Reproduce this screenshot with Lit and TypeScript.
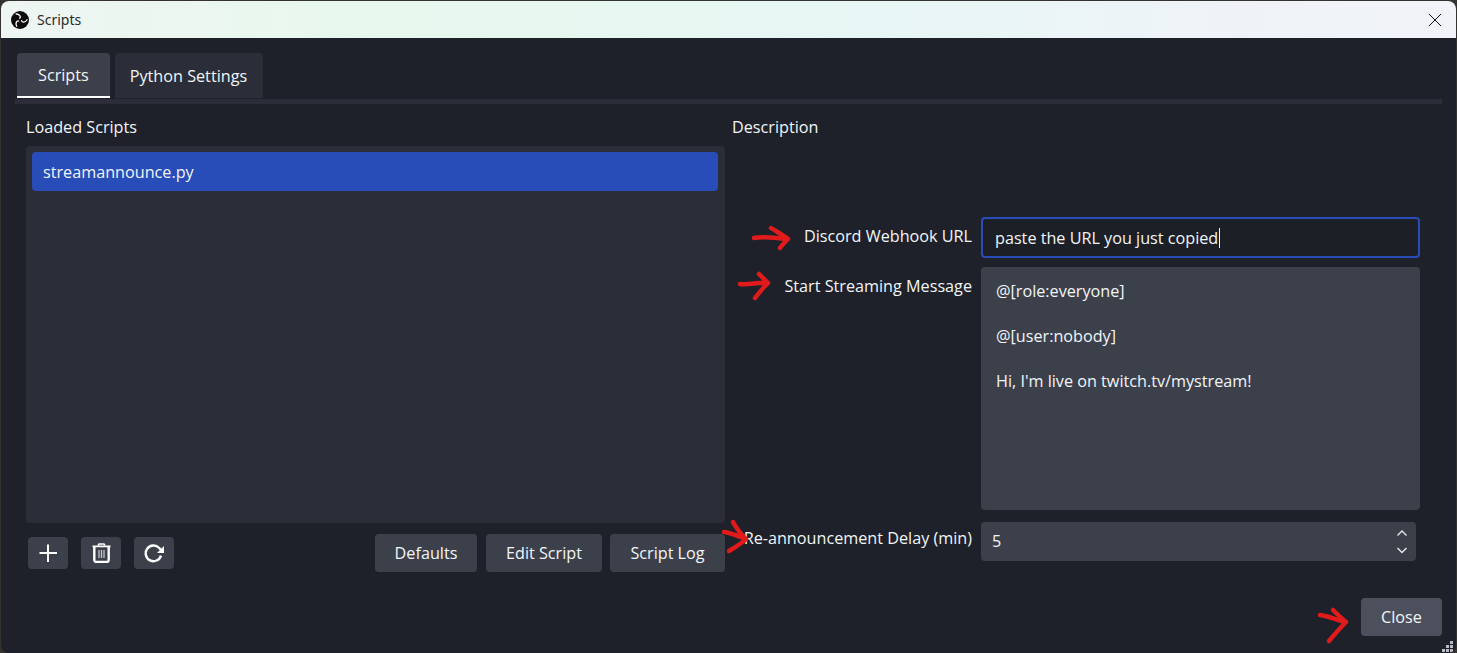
import { LitElement, css, html, svg } from "lit";
import { customElement } from "lit/decorators.js";

const arrows = svg`
  <path d="M754 238 C763 236 775 238 787 239 M771 228 C777 232 783 235 788 239 C785 242 782 245 780 248" />
  <path d="M740 284 C750 285 758 282 767 283 M759 274 C762 277 765 280 768 283 C763 288 758 294 755 298" />
  <path d="M724 532 C732 533 740 537 746 539 M733 522 C736 528 741 534 746 539 C741 544 734 548 729 551" />
  <path d="M1320 615 C1328 616 1337 620 1345 622 M1333 610 C1337 614 1341 618 1346 622 C1340 628 1334 635 1329 641" />
`;

// one arm of the logo swirl, drawn three times
const blade = "M8.800 7.300C10.200 5.800 8.600 3 5.200 3";

@customElement("app-root")
export class AppRoot extends LitElement {
  render() {
    return html`
      <div class="window">
        <header class="titlebar">
          <svg class="logo" viewBox="0 0 18 18">
            <circle cx="9" cy="9" r="9" fill="#0c0c0c" />
            <g fill="none" stroke="#fff" stroke-width="1.300" stroke-linecap="round">
              <path d="${blade}" />
              <path d="${blade}" transform="rotate(120 9 9)" />
              <path d="${blade}" transform="rotate(240 9 9)" />
            </g>
          </svg>
          <span class="title">Scripts</span>
          <svg class="x" viewBox="0 0 12 12"><path d="M0 0 12 12M12 0 0 12" /></svg>
        </header>

        <main class="body">
          <nav class="tabs">
            <div class="tab active">Scripts</div>
            <div class="tab">Python Settings</div>
          </nav>
          <div class="pane-line"></div>

          <div class="columns">
            <section class="left">
              <div class="heading">Loaded Scripts</div>
              <div class="list">
                <div class="item">streamannounce.py</div>
              </div>
              <div class="toolbar">
                <button class="icon-btn">
                  <svg viewBox="-1 0 20 20" width="20" height="20"><path d="M9 1.500v17.500M.5 10h17.500" stroke="#fff" stroke-width="2" fill="none" /></svg>
                </button>
                <button class="icon-btn">
                  <svg viewBox="0 0 20 20" width="20" height="20" fill="none" stroke="#fff">
                    <path d="M1.500 3.300h18" stroke-width="1.800" />
                    <path d="M7 2.500 8 1h5l1 1.500" stroke-width="1.400" />
                    <path d="M3.300 4v13a2.200 2.200 0 0 0 2.200 2h10a2.200 2.200 0 0 0 2.200-2V4" stroke-width="2.400" />
                    <path d="M8 7v8M10.500 7v8M13 7v8" stroke-width="1.300" stroke="#c8c8c8" />
                  </svg>
                </button>
                <button class="icon-btn">
                  <svg viewBox="0 0 20 20" width="20" height="20" fill="none" stroke="#fff">
                    <path d="M17 12.600A7.800 7.800 0 1 1 15.200 5L18 8" stroke-width="2.400" />
                    <path d="M20 3v7h-7z" fill="#fff" stroke="none" />
                  </svg>
                </button>
                <span class="spacer"></span>
                <button class="btn defaults">Defaults</button>
                <button class="btn edit">Edit Script</button>
                <button class="btn log">Script Log</button>
              </div>
            </section>

            <section class="right">
              <div class="heading">Description</div>
              <div class="form">
                <label class="lbl first">Discord Webhook URL</label>
                <div class="input">paste the URL you just copied<span class="caret"></span></div>
                <label class="lbl later">Start Streaming Message</label>
                <div class="textarea">
                  <p>@[role:everyone]</p>
                  <p>@[user:nobody]</p>
                  <p>Hi, I'm live on twitch.tv/mystream!</p>
                </div>
                <label class="lbl later">Re-announcement Delay (min)</label>
                <div class="spin">
                  <span class="value">5</span>
                  <svg viewBox="0 0 12 24" width="12" height="24" fill="none" stroke="#e8e8e8" stroke-width="1.400">
                    <path d="M1.500 5.500 6 1l4.500 4.500M1.500 18 6 22.500l4.500-4.500" />
                  </svg>
                </div>
              </div>
            </section>
          </div>

          <footer class="footer">
            <button class="btn close">Close</button>
          </footer>
        </main>

        <div class="grip">
          <i style="grid-area:1/3"></i>
          <i style="grid-area:2/2"></i><i style="grid-area:2/3"></i>
          <i style="grid-area:3/1"></i><i style="grid-area:3/2"></i><i style="grid-area:3/3"></i>
        </div>
      </div>
      <svg class="arrows" viewBox="0 0 1457 653" fill="none" stroke="#e11b1b" stroke-width="4.500" stroke-linecap="round" stroke-linejoin="round">${arrows}</svg>
    `;
  }

  static styles = css`
    :host {
      display: block;
      position: relative;
      width: 1457px;
      height: 653px;
      overflow: hidden;
      background: #33322f;
      font-family: "Open Sans", "Noto Sans", sans-serif;
      font-size: 16.2px;
      color: #f2f5f8;
    }

    .window {
      position: relative;
      display: flex;
      flex-direction: column;
      height: 652px;
      margin: 1px 1px 0 1px;
      border-radius: 8px;
      overflow: hidden;
      background: #1e2129;
    }

    .titlebar {
      display: flex;
      align-items: center;
      flex: none;
      height: 37px;
      padding: 0 15px 0 10px;
      background: linear-gradient(90deg, #eef5f2 0%, #e8f8ee 25%, #e6f7f4 55%, #eff3f8 85%, #f1f3f8 100%);
      color: #2a2a2a;
    }
    .logo {
      width: 18px;
      height: 18px;
      margin-right: 8px;
    }
    .title {
      flex: 1;
      font-size: 14px;
      font-family: "Noto Sans", sans-serif;
    }
    .x {
      width: 12px;
      height: 12px;
      fill: none;
      stroke: #111;
      stroke-width: 1;
    }

    .body {
      flex: 1;
      display: flex;
      flex-direction: column;
      padding: 15px 14px 17px 14px;
    }

    .tabs {
      display: flex;
      gap: 5px;
      padding-left: 2px;
    }
    .tab {
      height: 45px;
      box-sizing: border-box;
      padding: 0 21px;
      display: flex;
      align-items: center;
      border-radius: 4px 4px 0 0;
      background: #2b2e38;
    }
    .tab + .tab {
      padding: 0 15px;
      width: 148px;
    }
    .tab.active {
      background: #3c404b;
      border-bottom: 2px solid #fff;
    }
    .pane-line {
      height: 5px;
      margin-top: 1px;
      background: #2b2e38;
    }

    .columns {
      display: flex;
      gap: 7px;
      padding-left: 11px;
    }
    .heading {
      box-sizing: border-box;
      height: 42px;
      padding-top: 4px;
      display: flex;
      align-items: center;
    }
    .left {
      display: flex;
      flex-direction: column;
      width: 699px;
    }
    .list {
      height: 365px;
      padding: 6px 7px 6px 6px;
      border-radius: 4px;
      background: #2b2e38;
    }
    .item {
      height: 39px;
      padding-left: 11px;
      display: flex;
      align-items: center;
      border-radius: 4px;
      background: #284cb8;
    }
    .toolbar {
      display: flex;
      align-items: center;
      height: 38px;
      margin-top: 11px;
      padding-left: 2px;
    }
    .spacer {
      flex: 1;
    }
    button {
      border: none;
      padding: 0;
      color: inherit;
      font: inherit;
      border-radius: 4px;
      background: #3c404b;
    }
    .icon-btn {
      display: flex;
      align-items: center;
      justify-content: center;
      width: 40px;
      height: 32px;
      margin-right: 13px;
    }
    .btn {
      height: 38px;
    }
    .defaults {
      width: 102px;
      margin-right: 9px;
    }
    .edit {
      width: 116px;
      margin-right: 8px;
    }
    .log {
      width: 115px;
    }

    .right {
      width: 688px;
    }
    .form {
      display: grid;
      grid-template-columns: 240px 439px;
      column-gap: 9px;
      margin-top: 71px;
    }
    .lbl {
      text-align: right;
      white-space: nowrap;
    }
    .lbl.first {
      padding-top: 8px;
    }
    .lbl.later {
      padding-top: 17px;
    }
    .input {
      box-sizing: border-box;
      height: 41px;
      padding-left: 12px;
      display: flex;
      align-items: center;
      border: 2px solid #284cb8;
      border-radius: 4px;
      background: #1d1f26;
    }
    .caret {
      width: 1px;
      height: 20px;
      margin-left: 1px;
      background: #f2f5f8;
    }
    .textarea {
      box-sizing: border-box;
      height: 243px;
      margin-top: 9px;
      padding: 13px 15px;
      border-radius: 4px;
      background: #3c404b;
    }
    .textarea p {
      margin: 0 0 23px;
      line-height: 22px;
    }
    .spin {
      box-sizing: border-box;
      width: 435px;
      height: 39px;
      margin-top: 12px;
      padding: 0 8px 0 11px;
      display: flex;
      align-items: center;
      justify-content: space-between;
      border-radius: 4px;
      background: #3c404b;
    }
    .value {
      margin-bottom: 2px;
    }

    .footer {
      display: flex;
      justify-content: flex-end;
      margin-top: auto;
    }
    .close {
      width: 81px;
      background: #4c505c;
    }

    .grip {
      position: absolute;
      right: 3px;
      bottom: 1px;
      display: grid;
      grid-template-columns: repeat(3, 3px);
      grid-template-rows: repeat(3, 3px);
      gap: 1px;
    }
    .grip i {
      background: #b9bcc2;
    }

    .arrows {
      position: absolute;
      inset: 0;
      width: 1457px;
      height: 653px;
      pointer-events: none;
    }
  `;
}

declare global {
  interface HTMLElementTagNameMap {
    "app-root": AppRoot;
  }
}
